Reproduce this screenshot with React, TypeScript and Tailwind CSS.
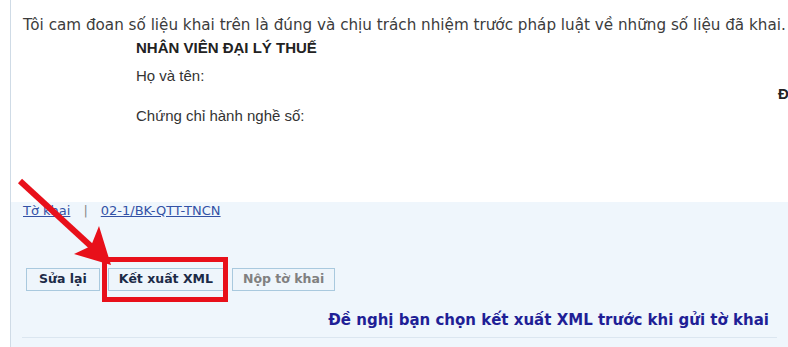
export default function App() {
  return (
    <div className="relative w-[788px] h-[347px] overflow-hidden bg-white">
      <div className="ml-[10px] h-full flex flex-col border-l border-[#cfdbe6]">
        {/* Declaration */}
        <div className="h-[192px] shrink-0 font-['Liberation_Sans',Arial,sans-serif] text-[#333] whitespace-nowrap">
          <p className="mt-[15px] pl-[12px] h-[20px] leading-[20px] text-[15.2px] font-['DejaVu_Sans',Verdana,sans-serif] text-[#3c3c3c]">
            Tôi cam đoan số liệu khai trên là đúng và chịu trách nhiệm trước pháp luật về những số liệu đã khai.
          </p>
          <p className="mt-[4px] pl-[125px] h-[18px] leading-[18px] text-[15px] font-bold text-[#222]">
            NHÂN VIÊN ĐẠI LÝ THUẾ
          </p>
          <p className="mt-[10px] pl-[125px] h-[18px] leading-[18px] text-[15px]">Họ và tên:</p>
          <p className="pl-[767px] h-[18px] leading-[18px] text-[15px] font-bold text-[#222]">
            ĐẠI DIỆN HỢP PHÁP CỦA NGƯỜI NỘP THUẾ
          </p>
          <p className="mt-[4px] pl-[125px] h-[18px] leading-[18px] text-[15px]">Chứng chỉ hành nghề số:</p>
        </div>

        {/* Action panel */}
        <div className="flex-1 mt-[10px] bg-[#eff6fc] font-['DejaVu_Sans',Verdana,sans-serif]">
          <div className="mt-[1px] pl-[12px] flex items-center gap-[13px] h-[16px] text-[13px] leading-[16px]">
            <a className="text-[#3352a6] underline">Tờ khai</a>
            <span className="text-[#888]">|</span>
            <a className="text-[#3352a6] underline">02-1/BK-QTT-TNCN</a>
          </div>

          <div className="mt-[49px] pl-[15px] flex gap-[8px]">
            <button className="h-[23px] px-[12px] bg-[#eef5fb] border border-[#a9c9de] text-[12.5px] font-bold text-[#1d2b47]">
              Sửa lại
            </button>
            <button className="h-[23px] px-[10px] bg-[#eef5fb] border border-[#a9c9de] text-[12.5px] font-bold text-[#1d2b47]">
              Kết xuất XML
            </button>
            <button className="h-[23px] px-[10px] bg-[#eef5fb] border border-[#a9c9de] text-[12.5px] font-bold text-[#808080]">
              Nộp tờ khai
            </button>
          </div>

          <p className="mt-[20px] pr-[19px] h-[18px] leading-[18px] text-right text-[15px] font-bold text-[#1f1f96]">
            Đề nghị bạn chọn kết xuất XML trước khi gửi tờ khai
          </p>

          <div className="mt-[8px] mx-[11px] border-t border-[#dbe6f0]" />
        </div>
      </div>

      {/* Annotation: red arrow and frame */}
      <svg className="absolute left-0 top-0" width="788" height="347" viewBox="0 0 788 347">
        <line x1="20" y1="181" x2="94" y2="249" stroke="#e8101a" strokeWidth="6" />
        <polygon points="111,265 74,254 91,246 99,226" fill="#e8101a" />
      </svg>
      <div className="absolute left-[102px] top-[257px] w-[126px] h-[45px] border-[5px] border-[#e8101a]" />
    </div>
  );
}
